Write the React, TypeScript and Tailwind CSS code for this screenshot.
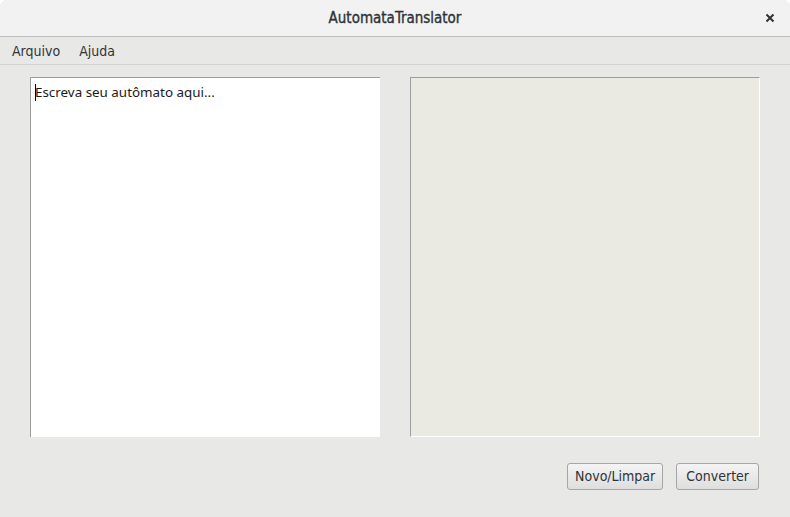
export default function App() {
    const ui = { fontFamily: '"DejaVu Sans Condensed", "DejaVu Sans", sans-serif' }

    return (
        <div className="w-[790px] h-[517px] flex flex-col bg-[#e8e8e7] overflow-hidden rounded-t-[7px]" style={ui}>
            {/* title bar */}
            <div className="h-[37px] shrink-0 flex items-center justify-center relative bg-[#f2f2f2] border-b border-[#bdbdbd]">
                <span className="text-[15px] text-[#2e3436] [-webkit-text-stroke:0.35px_#2e3436]">AutomataTranslator</span>
                <button className="absolute right-[12px] top-[10px] w-[16px] h-[16px] flex items-center justify-center text-[#2e3436]">
                    <svg width="10" height="10" viewBox="0 0 10 10">
                        <path d="M1.5 1.5 L8.5 8.5 M8.5 1.5 L1.5 8.5" stroke="#2e3436" strokeWidth="2" />
                    </svg>
                </button>
            </div>

            {/* menu */}
            <div className="h-[28px] shrink-0 flex items-center gap-[19px] px-[12px] pt-[1px] border-b border-[#d2d2d0] text-[14px] text-[#2e3436]">
                <span>Arquivo</span>
                <span>Ajuda</span>
            </div>

            {/* panels */}
            <div className="flex gap-[30px] pl-[30px] pt-[12px]">
                <div className="w-[350px] h-[360px] bg-white border-l border-t border-[#9e9e9e] pl-[4px] pt-[5px]">
                    <div className="flex items-center text-[13.4px] text-[#1a1a1a] leading-[18px]" style={{ fontFamily: '"Noto Sans", sans-serif' }}>
                        <span className="w-px h-[17px] bg-black mr-[-1px]" />
                        <span>Escreva seu autômato aqui...</span>
                    </div>
                </div>
                <div className="w-[350px] h-[360px] bg-[#eae9e2] border-l border-t border-[#9e9e9e] border-r border-b border-r-white border-b-white" />
            </div>

            {/* buttons */}
            <div className="flex justify-end gap-[13px] pr-[31px] pt-[26px]">
                <button className="h-[27px] px-[7px] rounded-[3px] border border-[#a6a6a6] bg-gradient-to-b from-[#f4f4f4] to-[#dedede] text-[14px] text-[#2e3436]">
                    Novo/Limpar
                </button>
                <button className="h-[27px] px-[9px] rounded-[3px] border border-[#a6a6a6] bg-gradient-to-b from-[#f4f4f4] to-[#dedede] text-[14px] text-[#2e3436]">
                    Converter
                </button>
            </div>
        </div>
    )
}
